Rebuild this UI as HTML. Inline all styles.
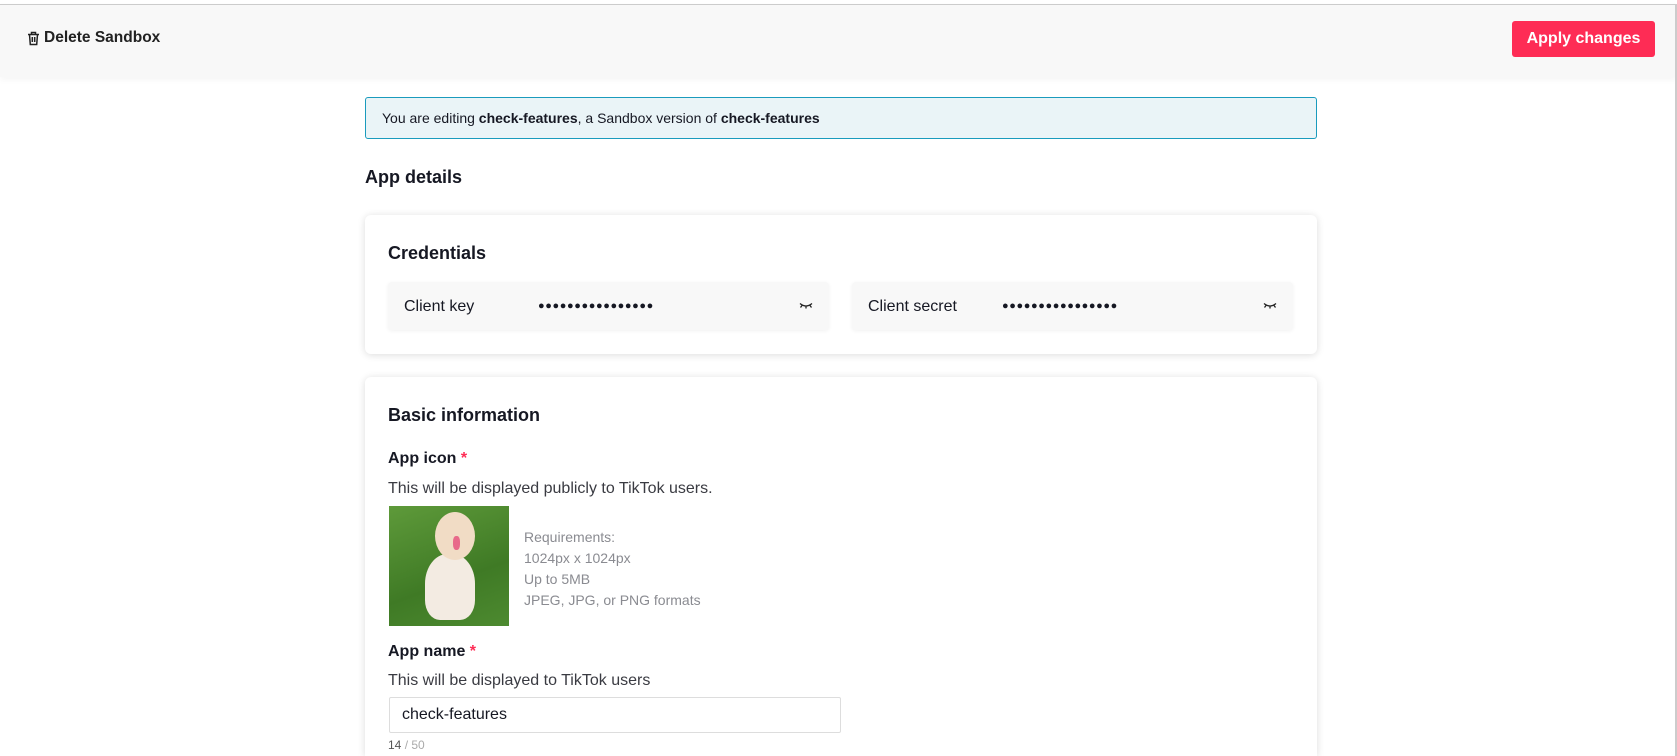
<!DOCTYPE html>
<html style="width:1677px;height:756px;overflow:hidden"><head><meta charset="utf-8"><style>
*{box-sizing:border-box;margin:0;padding:0}
body{width:1677px;height:756px;overflow:hidden;background:#fff;font-family:"Liberation Sans",Arial,sans-serif;color:#161823;position:relative}
.abs{position:absolute}
.hdr{left:0;top:4px;width:1677px;height:73px;background:#f8f8f8;border-top:1px solid #ccc;box-shadow:0 3px 6px rgba(0,0,0,.04)}
.rb{left:1675px;top:4px;width:2px;height:752px;background:#ccc}
.btn{left:1512px;top:21px;width:143px;height:36px;background:#fe2c55;border-radius:3px;color:#fff;font-weight:bold;font-size:16px;line-height:36px;text-align:center}
.banner{left:365px;top:97px;width:952px;height:42px;background:#eaf4f7;border:1px solid #1a9bbd;border-radius:3px;font-size:14px;line-height:40px;padding-left:16px}
.card{left:365px;width:952px;background:#fff;border-radius:6px;box-shadow:0 1px 8px rgba(0,0,0,.14)}
h2{font-size:18px;font-weight:bold;position:absolute}
.fld{top:282px;height:48px;width:441px;background:#f8f8f8;border-radius:4px;box-shadow:0 1px 4px rgba(0,0,0,.06);font-size:16px;line-height:50px}
.fld .l{position:absolute;left:16px}
.fld .d{position:absolute;left:150px;font-size:11px;letter-spacing:0.6px;line-height:48px}
.fld svg{position:absolute;right:16px;top:20px}
.t{position:absolute;font-size:16px}
.req{color:#8a8b91;font-size:14px;line-height:21px}
</style></head><body>
<div class="abs hdr"></div>
<div class="abs rb"></div>
<div class="abs" style="left:27px;top:29px;font-size:15.5px;font-weight:bold;color:#222;display:flex;align-items:center;gap:4px">
<svg width="13" height="15" viewBox="0 0 13 15" fill="none" stroke="#222" stroke-width="1.5"><path d="M1 3.5h11M4.5 3.5V1.5h4v2M2.5 3.5l.8 10h6.4l.8-10M5.3 6v5M7.7 6v5"/></svg>Delete Sandbox</div>
<div class="abs btn">Apply changes</div>
<div class="abs banner">You are editing <b>check-features</b>, a Sandbox version of <b>check-features</b></div>
<h2 style="left:365px;top:167px">App details</h2>
<div class="abs card" style="top:215px;height:139px"></div>
<h2 style="left:388px;top:243px">Credentials</h2>
<div class="abs fld" style="left:388px"><span class="l">Client key</span><span class="d">●●●●●●●●●●●●●●●●</span><svg width="14" height="8" viewBox="0 0 14 8" fill="none" stroke="#222" stroke-width="1.3"><path d="M1 1.5q6 5 12 0M3 3.5l-1.5 2M7 4.5v2M11 3.5l1.5 2"/></svg></div>
<div class="abs fld" style="left:852px"><span class="l">Client secret</span><span class="d">●●●●●●●●●●●●●●●●</span><svg width="14" height="8" viewBox="0 0 14 8" fill="none" stroke="#222" stroke-width="1.3"><path d="M1 1.5q6 5 12 0M3 3.5l-1.5 2M7 4.5v2M11 3.5l1.5 2"/></svg></div>
<div class="abs card" style="top:377px;height:379px;border-radius:6px 6px 0 0"></div>
<h2 style="left:388px;top:405px">Basic information</h2>
<div class="t" style="left:388px;top:450px;font-weight:bold">App icon <span style="color:#fe2c55">*</span></div>
<div class="t" style="left:388px;top:480px;color:#3a3b42">This will be displayed publicly to TikTok users.</div>
<div class="abs" style="left:389px;top:506px;width:120px;height:120px;overflow:hidden;background:linear-gradient(160deg,#5e9a3a,#3f7a25 60%,#4d8a30)">
<div class="abs" style="left:36px;top:48px;width:50px;height:66px;background:#f3ebe2;border-radius:45% 45% 30% 30%"></div>
<div class="abs" style="left:46px;top:6px;width:40px;height:48px;background:#f1dcc5;border-radius:50%"></div>
<div class="abs" style="left:64px;top:30px;width:7px;height:14px;background:#e86a8a;border-radius:40%"></div>
</div>
<div class="abs req" style="left:524px;top:527px">Requirements:<br>1024px x 1024px<br>Up to 5MB<br>JPEG, JPG, or PNG formats</div>
<div class="t" style="left:388px;top:643px;font-weight:bold">App name <span style="color:#fe2c55">*</span></div>
<div class="t" style="left:388px;top:672px;color:#3a3b42">This will be displayed to TikTok users</div>
<div class="abs" style="left:389px;top:697px;width:452px;height:36px;border:1px solid #ddd;border-radius:2px;font-size:16px;line-height:34px;padding-left:12px">check-features</div>
<div class="abs" style="left:388px;top:738px;font-size:12px;color:#555">14 <span style="color:#aaa">/ 50</span></div>
</body></html>
